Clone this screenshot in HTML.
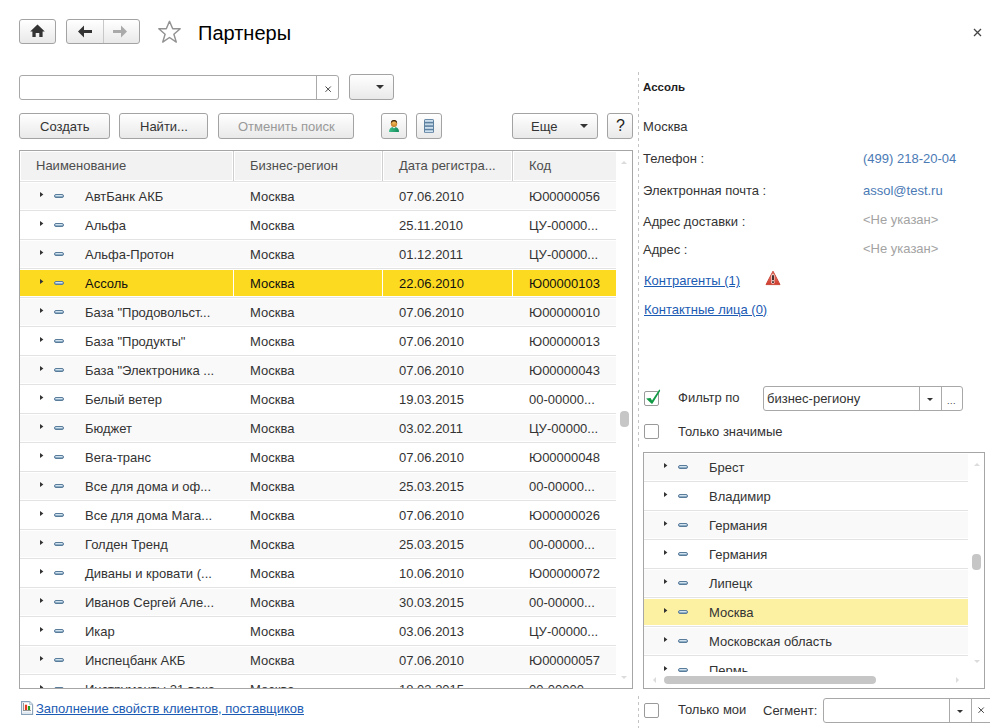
<!DOCTYPE html>
<html><head><meta charset="utf-8"><style>
*{margin:0;padding:0;box-sizing:content-box}
html,body{width:999px;height:728px;overflow:hidden;background:#fff}
body{position:relative;font-family:"Liberation Sans",sans-serif;color:#333}
.t{position:absolute;white-space:nowrap;font-family:"Liberation Sans",sans-serif}
.r{color:#333}
.sl{color:#111}
.h{color:#4d4d4d}
.lnk{color:#1b5bb3;text-decoration:underline}
.btn{position:absolute;border:1px solid #a3a3a3;border-radius:3px;background:linear-gradient(#ffffff,#e9e9e9)}
.inp{position:absolute;border:1px solid #a8a8a8;border-radius:3px;background:#fff}
.tri{position:absolute;width:0;height:0;border-left:4px solid transparent;border-right:4px solid transparent;border-top:4px solid #333}
.arr{position:absolute;width:0;height:0;border-top:2.5px solid transparent;border-bottom:2.5px solid transparent;border-left:3px solid #333}
.pill{position:absolute;width:8px;height:2px;border:1px solid #6a8aa8;border-radius:2px;background:linear-gradient(#e4eef6,#a9c2d6)}
.cb{position:absolute;width:13px;height:13px;border:1px solid #9a9a9a;border-radius:2px;background:#fff}
</style></head><body>
<div class="btn" style="left:19px;top:19px;width:35px;height:23px"></div>
<svg style="position:absolute;left:30px;top:24px" width="15" height="13" viewBox="0 0 15 13"><path d="M7.5 0.6 L14.8 7.4 L12.6 7.4 L12.6 12.9 L9.3 12.9 L9.3 9.1 L5.7 9.1 L5.7 12.9 L2.4 12.9 L2.4 7.4 L0.2 7.4 Z" fill="#333"/></svg>
<div class="btn" style="left:66px;top:19px;width:72px;height:23px"></div>
<div style="position:absolute;left:103px;top:20px;width:1px;height:23px;background:#c8c8c8"></div>
<svg style="position:absolute;left:78px;top:25px" width="16" height="13" viewBox="0 0 16 13"><path d="M0 6.5 L6 0.5 L6 5 L14 5 L14 8 L6 8 L6 12.5 Z" fill="#333"/></svg>
<svg style="position:absolute;left:113px;top:25px" width="16" height="13" viewBox="0 0 16 13"><path d="M14 6.5 L8 0.5 L8 5 L0 5 L0 8 L8 8 L8 12.5 Z" fill="#aaa"/></svg>
<svg style="position:absolute;left:152px;top:15px" width="35" height="33" viewBox="0 0 35 33"><path d="M17.5 6.3 L20.7 13.8 L28.2 13.8 L21.9 19.3 L24.3 27.1 L17.5 22.5 L10.7 27.1 L13.1 19.3 L6.8 13.8 L14.3 13.8 Z" fill="none" stroke="#929292" stroke-width="1.45" stroke-linejoin="round"/></svg>
<div class="t " style="left:198px;top:23px;font-size:20px;line-height:20px;color:#000">Партнеры</div>

<svg style="position:absolute;left:973px;top:27.5px" width="9" height="9" viewBox="0 0 9 9"><path d="M1 1 L8 8 M8 1 L1 8" stroke="#444" stroke-width="1.3"/></svg>
<div class="inp" style="left:19px;top:75px;width:318px;height:23px"></div>
<div style="position:absolute;left:316px;top:76px;width:1px;height:23px;background:#aaa"></div>
<svg style="position:absolute;left:324.5px;top:85.5px" width="7" height="7" viewBox="0 0 7 7"><path d="M0.5 0.5 L5.8 5.8 M5.8 0.5 L0.5 5.8" stroke="#444" stroke-width="1"/></svg>
<div class="btn" style="left:349px;top:74px;width:43px;height:24px"></div>
<div class="tri" style="left:376px;top:85px"></div>
<div class="btn" style="left:19px;top:113px;width:89px;height:24px"></div>
<div class="t " style="left:40px;top:120px;font-size:13px;line-height:13px;color:#333">Создать</div>

<div class="btn" style="left:119px;top:113px;width:87px;height:24px"></div>
<div class="t " style="left:140px;top:120px;font-size:13px;line-height:13px;color:#333">Найти...</div>

<div class="btn" style="left:218px;top:113px;width:134px;height:24px"></div>
<div class="t " style="left:238px;top:120px;font-size:13px;line-height:13px;color:#999">Отменить поиск</div>

<div class="btn" style="left:381px;top:113px;width:24px;height:24px"></div>
<svg style="position:absolute;left:386px;top:118px" width="16" height="16" viewBox="0 0 16 16"><defs><radialGradient id="hd" cx="0.5" cy="0.4" r="0.6"><stop offset="0" stop-color="#f5c060"/><stop offset="1" stop-color="#c47a20"/></radialGradient><linearGradient id="bd" x1="0" y1="0" x2="1" y2="0"><stop offset="0" stop-color="#3fbf8a"/><stop offset="1" stop-color="#138a5a"/></linearGradient></defs><path d="M3 14 Q3 9 8 9 Q13 9 13 14 Z" fill="url(#bd)"/><path d="M6.8 9 L8 10.6 L9.4 9 Z" fill="#fff"/><ellipse cx="8" cy="5.4" rx="3.2" ry="3.5" fill="url(#hd)"/><path d="M4.9 5.2 Q5 2 8 2 Q11 2 11.1 5.2 Q10.2 3.3 8 3.3 Q5.8 3.3 4.9 5.2 Z" fill="#2a1a08"/></svg>
<div class="btn" style="left:416px;top:113px;width:24px;height:24px"></div>
<svg style="position:absolute;left:424px;top:119px" width="10" height="14" viewBox="0 0 10 14"><rect x="0" y="0" width="10" height="14" rx="1.5" fill="#5f82a1"/><rect x="1" y="0.9" width="8" height="1.9" fill="#cfe1ef"/><rect x="1" y="4.4" width="8" height="1.9" fill="#c6d9e8"/><rect x="1" y="7.9" width="8" height="1.9" fill="#cfe1ef"/><rect x="1" y="11.3" width="8" height="1.9" fill="#cfe1ef"/></svg>
<div class="btn" style="left:512px;top:113px;width:84px;height:24px"></div>
<div class="t " style="left:531px;top:120px;font-size:13px;line-height:13px;">Еще</div>

<div class="tri" style="left:580px;top:124px"></div>
<div class="btn" style="left:607px;top:113px;width:24px;height:24px"></div>
<div class="t" style="left:616px;top:117px;font-size:16px;line-height:18px;color:#222">?</div>
<div style="position:absolute;left:19px;top:150px;width:612px;height:537px;border:1px solid #a6a6a6;background:#fff;overflow:hidden">
<div style="position:absolute;left:1px;top:1px;width:595px;height:28px;background:#f2f2f2"></div>
<div style="position:absolute;left:0px;top:30px;width:596px;height:1px;background:#d9d9d9"></div>
<div style="position:absolute;left:212px;top:0px;width:1px;height:30px;background:#fff"></div>
<div style="position:absolute;left:213px;top:0px;width:1px;height:30px;background:#cfcfcf"></div>
<div style="position:absolute;left:214px;top:0px;width:1px;height:30px;background:#fff"></div>
<div style="position:absolute;left:361px;top:0px;width:1px;height:30px;background:#fff"></div>
<div style="position:absolute;left:362px;top:0px;width:1px;height:30px;background:#cfcfcf"></div>
<div style="position:absolute;left:363px;top:0px;width:1px;height:30px;background:#fff"></div>
<div style="position:absolute;left:491px;top:0px;width:1px;height:30px;background:#fff"></div>
<div style="position:absolute;left:492px;top:0px;width:1px;height:30px;background:#cfcfcf"></div>
<div style="position:absolute;left:493px;top:0px;width:1px;height:30px;background:#fff"></div>
<div class="t h" style="left:16px;top:7.5px;font-size:13px;line-height:13px;">Наименование</div>

<div class="t h" style="left:230px;top:7.5px;font-size:13px;line-height:13px;">Бизнес-регион</div>

<div class="t h" style="left:379px;top:7.5px;font-size:13px;line-height:13px;">Дата регистра...</div>

<div class="t h" style="left:509px;top:7.5px;font-size:13px;line-height:13px;">Код</div>

<div style="position:absolute;left:0px;top:30px;width:596px;height:1px;background:#e3e3e3"></div>
<div style="position:absolute;left:0px;top:32px;width:596px;height:26px;background:#f9f9f9"></div>
<svg style="position:absolute;left:20px;top:41px" width="4" height="5" viewBox="0 0 4 5"><path d="M0 0 L3.4 2.5 L0 5 Z" fill="#333"/></svg>
<svg style="position:absolute;left:34px;top:43px" width="10" height="4" viewBox="0 0 10 4"><rect x="0.5" y="0.5" width="9" height="3" rx="1.5" fill="#8eaec6" stroke="#5a7c9b" stroke-width="1"/><rect x="1.5" y="1" width="7" height="1" fill="#d2e2ee"/></svg>
<div class="t r" style="left:65px;top:38px;font-size:13px;line-height:15px">АвтБанк АКБ</div>

<div class="t r" style="left:230px;top:38px;font-size:13px;line-height:15px">Москва</div>

<div class="t r" style="left:379px;top:38px;font-size:13px;line-height:15px">07.06.2010</div>

<div class="t r" style="left:509px;top:38px;font-size:13px;line-height:15px">Ю00000056</div>

<div style="position:absolute;left:0px;top:59px;width:596px;height:1px;background:#e3e3e3"></div>
<div style="position:absolute;left:0px;top:61px;width:596px;height:26px;background:#fff"></div>
<svg style="position:absolute;left:20px;top:70px" width="4" height="5" viewBox="0 0 4 5"><path d="M0 0 L3.4 2.5 L0 5 Z" fill="#333"/></svg>
<svg style="position:absolute;left:34px;top:72px" width="10" height="4" viewBox="0 0 10 4"><rect x="0.5" y="0.5" width="9" height="3" rx="1.5" fill="#8eaec6" stroke="#5a7c9b" stroke-width="1"/><rect x="1.5" y="1" width="7" height="1" fill="#d2e2ee"/></svg>
<div class="t r" style="left:65px;top:67px;font-size:13px;line-height:15px">Альфа</div>

<div class="t r" style="left:230px;top:67px;font-size:13px;line-height:15px">Москва</div>

<div class="t r" style="left:379px;top:67px;font-size:13px;line-height:15px">25.11.2010</div>

<div class="t r" style="left:509px;top:67px;font-size:13px;line-height:15px">ЦУ-00000...</div>

<div style="position:absolute;left:0px;top:88px;width:596px;height:1px;background:#e3e3e3"></div>
<div style="position:absolute;left:0px;top:90px;width:596px;height:26px;background:#f9f9f9"></div>
<svg style="position:absolute;left:20px;top:99px" width="4" height="5" viewBox="0 0 4 5"><path d="M0 0 L3.4 2.5 L0 5 Z" fill="#333"/></svg>
<svg style="position:absolute;left:34px;top:101px" width="10" height="4" viewBox="0 0 10 4"><rect x="0.5" y="0.5" width="9" height="3" rx="1.5" fill="#8eaec6" stroke="#5a7c9b" stroke-width="1"/><rect x="1.5" y="1" width="7" height="1" fill="#d2e2ee"/></svg>
<div class="t r" style="left:65px;top:96px;font-size:13px;line-height:15px">Альфа-Протон</div>

<div class="t r" style="left:230px;top:96px;font-size:13px;line-height:15px">Москва</div>

<div class="t r" style="left:379px;top:96px;font-size:13px;line-height:15px">01.12.2011</div>

<div class="t r" style="left:509px;top:96px;font-size:13px;line-height:15px">ЦУ-00000...</div>

<div style="position:absolute;left:0px;top:117px;width:596px;height:1px;background:#e3e3e3"></div>
<div style="position:absolute;left:0px;top:119px;width:596px;height:26px;background:#fcda20"></div>
<div style="position:absolute;left:213px;top:118px;width:1px;height:28px;background:#fff"></div>
<div style="position:absolute;left:362px;top:118px;width:1px;height:28px;background:#fff"></div>
<div style="position:absolute;left:492px;top:118px;width:1px;height:28px;background:#fff"></div>
<svg style="position:absolute;left:20px;top:128px" width="4" height="5" viewBox="0 0 4 5"><path d="M0 0 L3.4 2.5 L0 5 Z" fill="#333"/></svg>
<svg style="position:absolute;left:34px;top:130px" width="10" height="4" viewBox="0 0 10 4"><rect x="0.5" y="0.5" width="9" height="3" rx="1.5" fill="#8eaec6" stroke="#5a7c9b" stroke-width="1"/><rect x="1.5" y="1" width="7" height="1" fill="#d2e2ee"/></svg>
<div class="t r sl" style="left:65px;top:125px;font-size:13px;line-height:15px">Ассоль</div>

<div class="t r sl" style="left:230px;top:125px;font-size:13px;line-height:15px">Москва</div>

<div class="t r sl" style="left:379px;top:125px;font-size:13px;line-height:15px">22.06.2010</div>

<div class="t r sl" style="left:509px;top:125px;font-size:13px;line-height:15px">Ю00000103</div>

<div style="position:absolute;left:0px;top:146px;width:596px;height:1px;background:#e3e3e3"></div>
<div style="position:absolute;left:0px;top:148px;width:596px;height:26px;background:#f9f9f9"></div>
<svg style="position:absolute;left:20px;top:157px" width="4" height="5" viewBox="0 0 4 5"><path d="M0 0 L3.4 2.5 L0 5 Z" fill="#333"/></svg>
<svg style="position:absolute;left:34px;top:159px" width="10" height="4" viewBox="0 0 10 4"><rect x="0.5" y="0.5" width="9" height="3" rx="1.5" fill="#8eaec6" stroke="#5a7c9b" stroke-width="1"/><rect x="1.5" y="1" width="7" height="1" fill="#d2e2ee"/></svg>
<div class="t r" style="left:65px;top:154px;font-size:13px;line-height:15px">База "Продовольст...</div>

<div class="t r" style="left:230px;top:154px;font-size:13px;line-height:15px">Москва</div>

<div class="t r" style="left:379px;top:154px;font-size:13px;line-height:15px">07.06.2010</div>

<div class="t r" style="left:509px;top:154px;font-size:13px;line-height:15px">Ю00000010</div>

<div style="position:absolute;left:0px;top:175px;width:596px;height:1px;background:#e3e3e3"></div>
<div style="position:absolute;left:0px;top:177px;width:596px;height:26px;background:#fff"></div>
<svg style="position:absolute;left:20px;top:186px" width="4" height="5" viewBox="0 0 4 5"><path d="M0 0 L3.4 2.5 L0 5 Z" fill="#333"/></svg>
<svg style="position:absolute;left:34px;top:188px" width="10" height="4" viewBox="0 0 10 4"><rect x="0.5" y="0.5" width="9" height="3" rx="1.5" fill="#8eaec6" stroke="#5a7c9b" stroke-width="1"/><rect x="1.5" y="1" width="7" height="1" fill="#d2e2ee"/></svg>
<div class="t r" style="left:65px;top:183px;font-size:13px;line-height:15px">База "Продукты"</div>

<div class="t r" style="left:230px;top:183px;font-size:13px;line-height:15px">Москва</div>

<div class="t r" style="left:379px;top:183px;font-size:13px;line-height:15px">07.06.2010</div>

<div class="t r" style="left:509px;top:183px;font-size:13px;line-height:15px">Ю00000013</div>

<div style="position:absolute;left:0px;top:204px;width:596px;height:1px;background:#e3e3e3"></div>
<div style="position:absolute;left:0px;top:206px;width:596px;height:26px;background:#f9f9f9"></div>
<svg style="position:absolute;left:20px;top:215px" width="4" height="5" viewBox="0 0 4 5"><path d="M0 0 L3.4 2.5 L0 5 Z" fill="#333"/></svg>
<svg style="position:absolute;left:34px;top:217px" width="10" height="4" viewBox="0 0 10 4"><rect x="0.5" y="0.5" width="9" height="3" rx="1.5" fill="#8eaec6" stroke="#5a7c9b" stroke-width="1"/><rect x="1.5" y="1" width="7" height="1" fill="#d2e2ee"/></svg>
<div class="t r" style="left:65px;top:212px;font-size:13px;line-height:15px">База "Электроника ...</div>

<div class="t r" style="left:230px;top:212px;font-size:13px;line-height:15px">Москва</div>

<div class="t r" style="left:379px;top:212px;font-size:13px;line-height:15px">07.06.2010</div>

<div class="t r" style="left:509px;top:212px;font-size:13px;line-height:15px">Ю00000043</div>

<div style="position:absolute;left:0px;top:233px;width:596px;height:1px;background:#e3e3e3"></div>
<div style="position:absolute;left:0px;top:235px;width:596px;height:26px;background:#fff"></div>
<svg style="position:absolute;left:20px;top:244px" width="4" height="5" viewBox="0 0 4 5"><path d="M0 0 L3.4 2.5 L0 5 Z" fill="#333"/></svg>
<svg style="position:absolute;left:34px;top:246px" width="10" height="4" viewBox="0 0 10 4"><rect x="0.5" y="0.5" width="9" height="3" rx="1.5" fill="#8eaec6" stroke="#5a7c9b" stroke-width="1"/><rect x="1.5" y="1" width="7" height="1" fill="#d2e2ee"/></svg>
<div class="t r" style="left:65px;top:241px;font-size:13px;line-height:15px">Белый ветер</div>

<div class="t r" style="left:230px;top:241px;font-size:13px;line-height:15px">Москва</div>

<div class="t r" style="left:379px;top:241px;font-size:13px;line-height:15px">19.03.2015</div>

<div class="t r" style="left:509px;top:241px;font-size:13px;line-height:15px">00-00000...</div>

<div style="position:absolute;left:0px;top:262px;width:596px;height:1px;background:#e3e3e3"></div>
<div style="position:absolute;left:0px;top:264px;width:596px;height:26px;background:#f9f9f9"></div>
<svg style="position:absolute;left:20px;top:273px" width="4" height="5" viewBox="0 0 4 5"><path d="M0 0 L3.4 2.5 L0 5 Z" fill="#333"/></svg>
<svg style="position:absolute;left:34px;top:275px" width="10" height="4" viewBox="0 0 10 4"><rect x="0.5" y="0.5" width="9" height="3" rx="1.5" fill="#8eaec6" stroke="#5a7c9b" stroke-width="1"/><rect x="1.5" y="1" width="7" height="1" fill="#d2e2ee"/></svg>
<div class="t r" style="left:65px;top:270px;font-size:13px;line-height:15px">Бюджет</div>

<div class="t r" style="left:230px;top:270px;font-size:13px;line-height:15px">Москва</div>

<div class="t r" style="left:379px;top:270px;font-size:13px;line-height:15px">03.02.2011</div>

<div class="t r" style="left:509px;top:270px;font-size:13px;line-height:15px">ЦУ-00000...</div>

<div style="position:absolute;left:0px;top:291px;width:596px;height:1px;background:#e3e3e3"></div>
<div style="position:absolute;left:0px;top:293px;width:596px;height:26px;background:#fff"></div>
<svg style="position:absolute;left:20px;top:302px" width="4" height="5" viewBox="0 0 4 5"><path d="M0 0 L3.4 2.5 L0 5 Z" fill="#333"/></svg>
<svg style="position:absolute;left:34px;top:304px" width="10" height="4" viewBox="0 0 10 4"><rect x="0.5" y="0.5" width="9" height="3" rx="1.5" fill="#8eaec6" stroke="#5a7c9b" stroke-width="1"/><rect x="1.5" y="1" width="7" height="1" fill="#d2e2ee"/></svg>
<div class="t r" style="left:65px;top:299px;font-size:13px;line-height:15px">Вега-транс</div>

<div class="t r" style="left:230px;top:299px;font-size:13px;line-height:15px">Москва</div>

<div class="t r" style="left:379px;top:299px;font-size:13px;line-height:15px">07.06.2010</div>

<div class="t r" style="left:509px;top:299px;font-size:13px;line-height:15px">Ю00000048</div>

<div style="position:absolute;left:0px;top:320px;width:596px;height:1px;background:#e3e3e3"></div>
<div style="position:absolute;left:0px;top:322px;width:596px;height:26px;background:#f9f9f9"></div>
<svg style="position:absolute;left:20px;top:331px" width="4" height="5" viewBox="0 0 4 5"><path d="M0 0 L3.4 2.5 L0 5 Z" fill="#333"/></svg>
<svg style="position:absolute;left:34px;top:333px" width="10" height="4" viewBox="0 0 10 4"><rect x="0.5" y="0.5" width="9" height="3" rx="1.5" fill="#8eaec6" stroke="#5a7c9b" stroke-width="1"/><rect x="1.5" y="1" width="7" height="1" fill="#d2e2ee"/></svg>
<div class="t r" style="left:65px;top:328px;font-size:13px;line-height:15px">Все для дома и оф...</div>

<div class="t r" style="left:230px;top:328px;font-size:13px;line-height:15px">Москва</div>

<div class="t r" style="left:379px;top:328px;font-size:13px;line-height:15px">25.03.2015</div>

<div class="t r" style="left:509px;top:328px;font-size:13px;line-height:15px">00-00000...</div>

<div style="position:absolute;left:0px;top:349px;width:596px;height:1px;background:#e3e3e3"></div>
<div style="position:absolute;left:0px;top:351px;width:596px;height:26px;background:#fff"></div>
<svg style="position:absolute;left:20px;top:360px" width="4" height="5" viewBox="0 0 4 5"><path d="M0 0 L3.4 2.5 L0 5 Z" fill="#333"/></svg>
<svg style="position:absolute;left:34px;top:362px" width="10" height="4" viewBox="0 0 10 4"><rect x="0.5" y="0.5" width="9" height="3" rx="1.5" fill="#8eaec6" stroke="#5a7c9b" stroke-width="1"/><rect x="1.5" y="1" width="7" height="1" fill="#d2e2ee"/></svg>
<div class="t r" style="left:65px;top:357px;font-size:13px;line-height:15px">Все для дома Мага...</div>

<div class="t r" style="left:230px;top:357px;font-size:13px;line-height:15px">Москва</div>

<div class="t r" style="left:379px;top:357px;font-size:13px;line-height:15px">07.06.2010</div>

<div class="t r" style="left:509px;top:357px;font-size:13px;line-height:15px">Ю00000026</div>

<div style="position:absolute;left:0px;top:378px;width:596px;height:1px;background:#e3e3e3"></div>
<div style="position:absolute;left:0px;top:380px;width:596px;height:26px;background:#f9f9f9"></div>
<svg style="position:absolute;left:20px;top:389px" width="4" height="5" viewBox="0 0 4 5"><path d="M0 0 L3.4 2.5 L0 5 Z" fill="#333"/></svg>
<svg style="position:absolute;left:34px;top:391px" width="10" height="4" viewBox="0 0 10 4"><rect x="0.5" y="0.5" width="9" height="3" rx="1.5" fill="#8eaec6" stroke="#5a7c9b" stroke-width="1"/><rect x="1.5" y="1" width="7" height="1" fill="#d2e2ee"/></svg>
<div class="t r" style="left:65px;top:386px;font-size:13px;line-height:15px">Голден Тренд</div>

<div class="t r" style="left:230px;top:386px;font-size:13px;line-height:15px">Москва</div>

<div class="t r" style="left:379px;top:386px;font-size:13px;line-height:15px">25.03.2015</div>

<div class="t r" style="left:509px;top:386px;font-size:13px;line-height:15px">00-00000...</div>

<div style="position:absolute;left:0px;top:407px;width:596px;height:1px;background:#e3e3e3"></div>
<div style="position:absolute;left:0px;top:409px;width:596px;height:26px;background:#fff"></div>
<svg style="position:absolute;left:20px;top:418px" width="4" height="5" viewBox="0 0 4 5"><path d="M0 0 L3.4 2.5 L0 5 Z" fill="#333"/></svg>
<svg style="position:absolute;left:34px;top:420px" width="10" height="4" viewBox="0 0 10 4"><rect x="0.5" y="0.5" width="9" height="3" rx="1.5" fill="#8eaec6" stroke="#5a7c9b" stroke-width="1"/><rect x="1.5" y="1" width="7" height="1" fill="#d2e2ee"/></svg>
<div class="t r" style="left:65px;top:415px;font-size:13px;line-height:15px">Диваны и кровати (...</div>

<div class="t r" style="left:230px;top:415px;font-size:13px;line-height:15px">Москва</div>

<div class="t r" style="left:379px;top:415px;font-size:13px;line-height:15px">10.06.2010</div>

<div class="t r" style="left:509px;top:415px;font-size:13px;line-height:15px">Ю00000072</div>

<div style="position:absolute;left:0px;top:436px;width:596px;height:1px;background:#e3e3e3"></div>
<div style="position:absolute;left:0px;top:438px;width:596px;height:26px;background:#f9f9f9"></div>
<svg style="position:absolute;left:20px;top:447px" width="4" height="5" viewBox="0 0 4 5"><path d="M0 0 L3.4 2.5 L0 5 Z" fill="#333"/></svg>
<svg style="position:absolute;left:34px;top:449px" width="10" height="4" viewBox="0 0 10 4"><rect x="0.5" y="0.5" width="9" height="3" rx="1.5" fill="#8eaec6" stroke="#5a7c9b" stroke-width="1"/><rect x="1.5" y="1" width="7" height="1" fill="#d2e2ee"/></svg>
<div class="t r" style="left:65px;top:444px;font-size:13px;line-height:15px">Иванов Сергей Але...</div>

<div class="t r" style="left:230px;top:444px;font-size:13px;line-height:15px">Москва</div>

<div class="t r" style="left:379px;top:444px;font-size:13px;line-height:15px">30.03.2015</div>

<div class="t r" style="left:509px;top:444px;font-size:13px;line-height:15px">00-00000...</div>

<div style="position:absolute;left:0px;top:465px;width:596px;height:1px;background:#e3e3e3"></div>
<div style="position:absolute;left:0px;top:467px;width:596px;height:26px;background:#fff"></div>
<svg style="position:absolute;left:20px;top:476px" width="4" height="5" viewBox="0 0 4 5"><path d="M0 0 L3.4 2.5 L0 5 Z" fill="#333"/></svg>
<svg style="position:absolute;left:34px;top:478px" width="10" height="4" viewBox="0 0 10 4"><rect x="0.5" y="0.5" width="9" height="3" rx="1.5" fill="#8eaec6" stroke="#5a7c9b" stroke-width="1"/><rect x="1.5" y="1" width="7" height="1" fill="#d2e2ee"/></svg>
<div class="t r" style="left:65px;top:473px;font-size:13px;line-height:15px">Икар</div>

<div class="t r" style="left:230px;top:473px;font-size:13px;line-height:15px">Москва</div>

<div class="t r" style="left:379px;top:473px;font-size:13px;line-height:15px">03.06.2013</div>

<div class="t r" style="left:509px;top:473px;font-size:13px;line-height:15px">ЦУ-00000...</div>

<div style="position:absolute;left:0px;top:494px;width:596px;height:1px;background:#e3e3e3"></div>
<div style="position:absolute;left:0px;top:496px;width:596px;height:26px;background:#f9f9f9"></div>
<svg style="position:absolute;left:20px;top:505px" width="4" height="5" viewBox="0 0 4 5"><path d="M0 0 L3.4 2.5 L0 5 Z" fill="#333"/></svg>
<svg style="position:absolute;left:34px;top:507px" width="10" height="4" viewBox="0 0 10 4"><rect x="0.5" y="0.5" width="9" height="3" rx="1.5" fill="#8eaec6" stroke="#5a7c9b" stroke-width="1"/><rect x="1.5" y="1" width="7" height="1" fill="#d2e2ee"/></svg>
<div class="t r" style="left:65px;top:502px;font-size:13px;line-height:15px">Инспецбанк АКБ</div>

<div class="t r" style="left:230px;top:502px;font-size:13px;line-height:15px">Москва</div>

<div class="t r" style="left:379px;top:502px;font-size:13px;line-height:15px">07.06.2010</div>

<div class="t r" style="left:509px;top:502px;font-size:13px;line-height:15px">Ю00000057</div>

<div style="position:absolute;left:0px;top:523px;width:596px;height:1px;background:#e3e3e3"></div>
<div style="position:absolute;left:0px;top:525px;width:596px;height:26px;background:#fff"></div>
<svg style="position:absolute;left:20px;top:534px" width="4" height="5" viewBox="0 0 4 5"><path d="M0 0 L3.4 2.5 L0 5 Z" fill="#333"/></svg>
<svg style="position:absolute;left:34px;top:536px" width="10" height="4" viewBox="0 0 10 4"><rect x="0.5" y="0.5" width="9" height="3" rx="1.5" fill="#8eaec6" stroke="#5a7c9b" stroke-width="1"/><rect x="1.5" y="1" width="7" height="1" fill="#d2e2ee"/></svg>
<div class="t r" style="left:65px;top:531px;font-size:13px;line-height:15px">Инструменты 21 века</div>

<div class="t r" style="left:230px;top:531px;font-size:13px;line-height:15px">Москва</div>

<div class="t r" style="left:379px;top:531px;font-size:13px;line-height:15px">18.03.2015</div>

<div class="t r" style="left:509px;top:531px;font-size:13px;line-height:15px">00-00000...</div>

<div style="position:absolute;left:601px;top:10px;width:0;height:0;border-left:3px solid transparent;border-right:3px solid transparent;border-bottom:3px solid #dcdcdc"></div>
<div style="position:absolute;left:601px;top:525px;width:0;height:0;border-left:3px solid transparent;border-right:3px solid transparent;border-top:3px solid #dcdcdc"></div>
<div style="position:absolute;left:600px;top:260px;width:9px;height:16px;border-radius:4px;background:#c6c6c6"></div>
</div>
<svg style="position:absolute;left:21px;top:701px" width="13" height="14" viewBox="0 0 13 14"><path d="M0.6 0.6 H8.6 L11.6 3.6 V13.4 H0.6 Z" fill="#fff" stroke="#86a0b8" stroke-width="1.1"/><path d="M8.6 0.6 V3.6 H11.6" fill="#dbe6ef" stroke="#a7bccd" stroke-width="0.8"/><rect x="2" y="2" width="0.9" height="7.6" fill="#888"/><rect x="3.9" y="3.7" width="2.2" height="5.3" fill="#e63a1e"/><rect x="6.9" y="5" width="2.2" height="4" fill="#2c9a1e"/><rect x="2" y="9" width="8" height="0.9" fill="#8a8a8a"/><rect x="2" y="10.7" width="8" height="1" fill="#cfe0ee"/></svg>
<div class="t lnk" style="left:36px;top:701.5px;font-size:13px;line-height:13px;">Заполнение свойств клиентов, поставщиков</div>

<div style="position:absolute;left:638px;top:72px;width:1px;height:376px;background:repeating-linear-gradient(to bottom,#c4c4c4 0,#c4c4c4 3px,transparent 3px,transparent 6px)"></div>
<div style="position:absolute;left:638px;top:696px;width:1px;height:32px;background:repeating-linear-gradient(to bottom,#c4c4c4 0,#c4c4c4 3px,transparent 3px,transparent 6px)"></div>
<div class="t" style="left:643px;top:81px;font-size:11.5px;line-height:13px;font-weight:bold;color:#1e1e1e">Ассоль</div>
<div class="t r" style="left:643px;top:119.5px;font-size:13px;line-height:13px;">Москва</div>

<div class="t r" style="left:643px;top:152px;font-size:13px;line-height:13px;">Телефон :</div>

<div class="t r" style="left:643px;top:184px;font-size:13px;line-height:13px;">Электронная почта :</div>

<div class="t r" style="left:643px;top:214.5px;font-size:13px;line-height:13px;">Адрес доставки :</div>

<div class="t r" style="left:643px;top:243.3px;font-size:13px;line-height:13px;">Адрес :</div>

<div class="t " style="left:863px;top:152px;font-size:13px;line-height:13px;color:#4a7ab5">(499) 218-20-04</div>

<div class="t " style="left:863px;top:183.5px;font-size:13px;line-height:13px;color:#4a7ab5">assol@test.ru</div>

<div class="t " style="left:863px;top:213px;font-size:13px;line-height:13px;color:#a3a3a3">&lt;Не указан&gt;</div>

<div class="t " style="left:863px;top:242.4px;font-size:13px;line-height:13px;color:#a3a3a3">&lt;Не указан&gt;</div>

<div class="t lnk" style="left:644px;top:273.8px;font-size:13px;line-height:13px;">Контрагенты (1)</div>

<div class="t lnk" style="left:644px;top:302.5px;font-size:13px;line-height:13px;">Контактные лица (0)</div>

<svg style="position:absolute;left:765px;top:270px" width="16" height="16" viewBox="0 0 16 16"><defs><linearGradient id="wg" x1="0" y1="0" x2="0" y2="1"><stop offset="0" stop-color="#f08a7c"/><stop offset="1" stop-color="#cf3a2a"/></linearGradient></defs><path d="M8 1.2 L15 14.6 H1 Z" fill="url(#wg)" stroke="#c9483a" stroke-width="1" stroke-linejoin="round"/><rect x="6.3" y="4.3" width="3.2" height="7.2" rx="1.4" fill="#fbe3df"/><rect x="6.2" y="10.6" width="3.4" height="3.2" rx="1.5" fill="#fbe3df"/><rect x="7.2" y="5.2" width="1.6" height="5" fill="#1a0505"/><rect x="7.2" y="11.3" width="1.6" height="1.6" fill="#1a0505"/></svg>
<div class="cb" style="left:644px;top:391px"></div><svg style="position:absolute;left:644px;top:388px" width="18" height="18" viewBox="0 0 18 18"><path d="M2.1 10.4 L6.6 10 L8 12.6 L15.3 1.6 Q16.6 1.9 16 3.2 L8.4 15.8 L7.6 15.8 Z" fill="#109a44"/></svg>
<div class="t r" style="left:678px;top:391.3px;font-size:13px;line-height:13px;">Фильтр по</div>

<div class="cb" style="left:644px;top:424px"></div>
<div class="t r" style="left:678px;top:424.5px;font-size:13px;line-height:13px;">Только значимые</div>

<div class="inp" style="left:763px;top:386px;width:198px;height:23px"></div>
<div style="position:absolute;left:919px;top:387px;width:1px;height:23px;background:#aaa"></div>
<div style="position:absolute;left:941px;top:387px;width:1px;height:23px;background:#aaa"></div>
<div class="tri" style="left:927px;top:398px;border-left-width:3.5px;border-right-width:3.5px;border-top-width:3.5px"></div>
<div class="t r" style="left:767px;top:391.7px;font-size:13px;line-height:13px;">бизнес-региону</div>

<div class="t" style="left:947px;top:397px;font-size:9px;line-height:9px;color:#333;letter-spacing:0.5px">...</div>
<div style="position:absolute;left:643px;top:452px;width:340px;height:235px;border:1px solid #a6a6a6;background:#fff;overflow:hidden">
<div style="position:absolute;left:0px;top:1px;width:324px;height:26px;background:#f9f9f9"></div>
<svg style="position:absolute;left:20px;top:10px" width="4" height="5" viewBox="0 0 4 5"><path d="M0 0 L3.4 2.5 L0 5 Z" fill="#333"/></svg>
<svg style="position:absolute;left:34px;top:12px" width="10" height="4" viewBox="0 0 10 4"><rect x="0.5" y="0.5" width="9" height="3" rx="1.5" fill="#8eaec6" stroke="#5a7c9b" stroke-width="1"/><rect x="1.5" y="1" width="7" height="1" fill="#d2e2ee"/></svg>
<div class="t r" style="left:65px;top:7px;font-size:13px;line-height:15px">Брест</div>

<div style="position:absolute;left:0px;top:28px;width:324px;height:1px;background:#e3e3e3"></div>
<div style="position:absolute;left:0px;top:30px;width:324px;height:26px;background:#fff"></div>
<svg style="position:absolute;left:20px;top:39px" width="4" height="5" viewBox="0 0 4 5"><path d="M0 0 L3.4 2.5 L0 5 Z" fill="#333"/></svg>
<svg style="position:absolute;left:34px;top:41px" width="10" height="4" viewBox="0 0 10 4"><rect x="0.5" y="0.5" width="9" height="3" rx="1.5" fill="#8eaec6" stroke="#5a7c9b" stroke-width="1"/><rect x="1.5" y="1" width="7" height="1" fill="#d2e2ee"/></svg>
<div class="t r" style="left:65px;top:36px;font-size:13px;line-height:15px">Владимир</div>

<div style="position:absolute;left:0px;top:57px;width:324px;height:1px;background:#e3e3e3"></div>
<div style="position:absolute;left:0px;top:59px;width:324px;height:26px;background:#f9f9f9"></div>
<svg style="position:absolute;left:20px;top:68px" width="4" height="5" viewBox="0 0 4 5"><path d="M0 0 L3.4 2.5 L0 5 Z" fill="#333"/></svg>
<svg style="position:absolute;left:34px;top:70px" width="10" height="4" viewBox="0 0 10 4"><rect x="0.5" y="0.5" width="9" height="3" rx="1.5" fill="#8eaec6" stroke="#5a7c9b" stroke-width="1"/><rect x="1.5" y="1" width="7" height="1" fill="#d2e2ee"/></svg>
<div class="t r" style="left:65px;top:65px;font-size:13px;line-height:15px">Германия</div>

<div style="position:absolute;left:0px;top:86px;width:324px;height:1px;background:#e3e3e3"></div>
<div style="position:absolute;left:0px;top:88px;width:324px;height:26px;background:#fff"></div>
<svg style="position:absolute;left:20px;top:97px" width="4" height="5" viewBox="0 0 4 5"><path d="M0 0 L3.4 2.5 L0 5 Z" fill="#333"/></svg>
<svg style="position:absolute;left:34px;top:99px" width="10" height="4" viewBox="0 0 10 4"><rect x="0.5" y="0.5" width="9" height="3" rx="1.5" fill="#8eaec6" stroke="#5a7c9b" stroke-width="1"/><rect x="1.5" y="1" width="7" height="1" fill="#d2e2ee"/></svg>
<div class="t r" style="left:65px;top:94px;font-size:13px;line-height:15px">Германия</div>

<div style="position:absolute;left:0px;top:115px;width:324px;height:1px;background:#e3e3e3"></div>
<div style="position:absolute;left:0px;top:117px;width:324px;height:26px;background:#f9f9f9"></div>
<svg style="position:absolute;left:20px;top:126px" width="4" height="5" viewBox="0 0 4 5"><path d="M0 0 L3.4 2.5 L0 5 Z" fill="#333"/></svg>
<svg style="position:absolute;left:34px;top:128px" width="10" height="4" viewBox="0 0 10 4"><rect x="0.5" y="0.5" width="9" height="3" rx="1.5" fill="#8eaec6" stroke="#5a7c9b" stroke-width="1"/><rect x="1.5" y="1" width="7" height="1" fill="#d2e2ee"/></svg>
<div class="t r" style="left:65px;top:123px;font-size:13px;line-height:15px">Липецк</div>

<div style="position:absolute;left:0px;top:144px;width:324px;height:1px;background:#e3e3e3"></div>
<div style="position:absolute;left:0px;top:146px;width:324px;height:26px;background:#fcf0a2"></div>
<svg style="position:absolute;left:20px;top:155px" width="4" height="5" viewBox="0 0 4 5"><path d="M0 0 L3.4 2.5 L0 5 Z" fill="#333"/></svg>
<svg style="position:absolute;left:34px;top:157px" width="10" height="4" viewBox="0 0 10 4"><rect x="0.5" y="0.5" width="9" height="3" rx="1.5" fill="#8eaec6" stroke="#5a7c9b" stroke-width="1"/><rect x="1.5" y="1" width="7" height="1" fill="#d2e2ee"/></svg>
<div class="t r" style="left:65px;top:152px;font-size:13px;line-height:15px">Москва</div>

<div style="position:absolute;left:0px;top:173px;width:324px;height:1px;background:#e3e3e3"></div>
<div style="position:absolute;left:0px;top:175px;width:324px;height:26px;background:#f9f9f9"></div>
<svg style="position:absolute;left:20px;top:184px" width="4" height="5" viewBox="0 0 4 5"><path d="M0 0 L3.4 2.5 L0 5 Z" fill="#333"/></svg>
<svg style="position:absolute;left:34px;top:186px" width="10" height="4" viewBox="0 0 10 4"><rect x="0.5" y="0.5" width="9" height="3" rx="1.5" fill="#8eaec6" stroke="#5a7c9b" stroke-width="1"/><rect x="1.5" y="1" width="7" height="1" fill="#d2e2ee"/></svg>
<div class="t r" style="left:65px;top:181px;font-size:13px;line-height:15px">Московская область</div>

<div style="position:absolute;left:0px;top:202px;width:324px;height:1px;background:#e3e3e3"></div>
<div style="position:absolute;left:0px;top:204px;width:324px;height:26px;background:#fff"></div>
<svg style="position:absolute;left:20px;top:213px" width="4" height="5" viewBox="0 0 4 5"><path d="M0 0 L3.4 2.5 L0 5 Z" fill="#333"/></svg>
<svg style="position:absolute;left:34px;top:215px" width="10" height="4" viewBox="0 0 10 4"><rect x="0.5" y="0.5" width="9" height="3" rx="1.5" fill="#8eaec6" stroke="#5a7c9b" stroke-width="1"/><rect x="1.5" y="1" width="7" height="1" fill="#d2e2ee"/></svg>
<div class="t r" style="left:65px;top:210px;font-size:13px;line-height:15px">Пермь</div>

<div style="position:absolute;left:0;top:219px;width:340px;height:16px;background:#fff"></div>
<div style="position:absolute;left:20px;top:223px;width:212px;height:8px;border-radius:4px;background:#c6c6c6"></div>
<div style="position:absolute;left:9px;top:224px;width:0;height:0;border-top:3px solid transparent;border-bottom:3px solid transparent;border-right:3px solid #dcdcdc"></div>
<div style="position:absolute;left:312px;top:224px;width:0;height:0;border-top:3px solid transparent;border-bottom:3px solid transparent;border-left:3px solid #dcdcdc"></div>
<div style="position:absolute;left:330px;top:10px;width:0;height:0;border-left:3px solid transparent;border-right:3px solid transparent;border-bottom:3px solid #dcdcdc"></div>
<div style="position:absolute;left:330px;top:207px;width:0;height:0;border-left:3px solid transparent;border-right:3px solid transparent;border-top:3px solid #dcdcdc"></div>
<div style="position:absolute;left:328px;top:101px;width:9px;height:16px;border-radius:4px;background:#c6c6c6"></div>
</div>
<div class="cb" style="left:644px;top:703px"></div>
<div class="t r" style="left:678px;top:703.2px;font-size:13px;line-height:13px;">Только мои</div>

<div class="t r" style="left:763px;top:704px;font-size:13px;line-height:13px;">Сегмент:</div>

<div class="inp" style="left:823px;top:698px;width:200px;height:23px;"></div>
<div style="position:absolute;left:949px;top:699px;width:1px;height:23px;background:#aaa"></div>
<div style="position:absolute;left:971px;top:699px;width:1px;height:23px;background:#aaa"></div>
<div class="tri" style="left:957px;top:710px;border-left-width:3.5px;border-right-width:3.5px;border-top-width:3.5px"></div>
<div style="position:absolute;left:990px;top:690px;width:9px;height:38px;background:#fff"></div>
<svg style="position:absolute;left:978px;top:707px" width="7" height="7" viewBox="0 0 7 7"><path d="M0.5 0.5 L5.8 5.8 M5.8 0.5 L0.5 5.8" stroke="#444" stroke-width="1"/></svg>
</body></html>
